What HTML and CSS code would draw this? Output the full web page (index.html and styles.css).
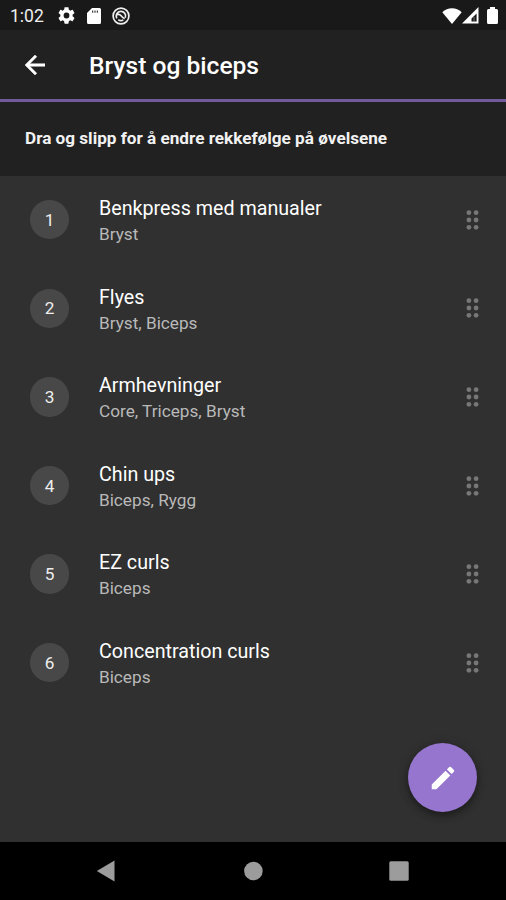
FILE: index.html
```html
<!DOCTYPE html>
<html lang="no">
<head>
<meta charset="utf-8">
<title>Bryst og biceps</title>
<link rel="stylesheet" href="styles.css">
</head>
<body>
<svg class="defs" aria-hidden="true">
  <symbol id="grip" viewBox="0 0 13 20"><circle cx="2.900" cy="2.700" r="2.400"/><circle cx="10.100" cy="2.700" r="2.400"/><circle cx="2.900" cy="10" r="2.400"/><circle cx="10.100" cy="10" r="2.400"/><circle cx="2.900" cy="17.300" r="2.400"/><circle cx="10.100" cy="17.300" r="2.400"/></symbol>
</svg>
<div class="screen">
  <div class="status">
    <span class="clock">1:02</span>
    <svg class="gear" viewBox="2 2 20 20"><path fill-rule="evenodd" d="M19.140 12.940c.04-.3.06-.61.06-.94 0-.32-.02-.64-.07-.94l2.030-1.580c.18-.14.23-.41.12-.61l-1.920-3.320c-.12-.22-.37-.29-.59-.22l-2.390.96c-.5-.38-1.030-.7-1.620-.94l-.36-2.540c-.04-.24-.24-.41-.48-.41h-3.840c-.24 0-.43.17-.47.41l-.36 2.540c-.59.24-1.130.57-1.620.94l-2.390-.96c-.22-.08-.47 0-.59.22L2.740 8.870c-.12.21-.08.47.12.61l2.030 1.580c-.05.3-.09.63-.09.94s.02.64.07.94l-2.030 1.580c-.18.14-.23.41-.12.61l1.920 3.320c.12.22.37.29.59.22l2.390-.96c.5.38 1.030.7 1.620.94l.36 2.540c.05.24.24.41.48.41h3.840c.24 0 .44-.17.47-.41l.36-2.540c.59-.24 1.130-.56 1.620-.94l2.390.96c.22.08.47 0 .59-.22l1.920-3.320c.12-.22.07-.47-.12-.61zM12 15.400A3.400 3.400 0 1 1 12 8.600a3.400 3.400 0 0 1 0 6.800z"/></svg>
    <svg class="card" viewBox="0 0 14 16"><path fill-rule="evenodd" d="M5 0h7.500Q14 0 14 1.500v13Q14 16 12.500 16h-11Q0 16 0 14.500V5zM5.200 2.600v2.200h1V2.600zM7.500 2.600v2.200h1V2.600zM9.800 2.600v2.200h1V2.600z"/></svg>
    <svg class="dnd" viewBox="0 0 18 18"><circle cx="9" cy="9" r="7.900"/><path d="M4.800 11.300A4.700 4.700 0 1 1 13.300 10.800M4.800 7.800c2-.8 3.300-.2 4.300 1s2.200 2.400 3.600 3M6.300 12.600c1.500 1.200 3.400 1.300 5 .3"/></svg>
    <svg class="wifi" viewBox="0 0 20 16"><path d="M10 16 .3 4.300C3 1.600 6.300.3 10 .3s7 1.300 9.700 4z"/></svg>
    <svg class="signal" viewBox="0 0 17 17"><path fill-rule="evenodd" d="M16.500 0v16.500H0zM14.600 6.500 9.500 11.500v3h5.100z"/><path d="M11.300 10h1.500v4.500h-1.500z" opacity=".25"/></svg>
    <svg class="battery" viewBox="0 0 11 17"><path d="M3 0h5v2h1.500Q11 2 11 3.500v12Q11 17 9.500 17h-8Q0 17 0 15.500v-12Q0 2 1.500 2H3z"/></svg>
  </div>
  <header class="bar">
    <svg class="back" viewBox="4 4 16 16"><path d="M20 11H7.830l5.590-5.590L12 4l-8 8 8 8 1.410-1.410L7.830 13H20z"/></svg>
    <h1>Bryst og biceps</h1>
  </header>
  <div class="hint"><span>Dra og slipp for å endre rekkefølge på øvelsene</span></div>
  <main class="list">
    <div class="row"><span class="num">1</span><div class="text"><div class="name">Benkpress med manualer</div><div class="sub">Bryst</div></div><svg class="grip"><use href="#grip"/></svg></div>
    <div class="row"><span class="num">2</span><div class="text"><div class="name">Flyes</div><div class="sub">Bryst, Biceps</div></div><svg class="grip"><use href="#grip"/></svg></div>
    <div class="row"><span class="num">3</span><div class="text"><div class="name">Armhevninger</div><div class="sub">Core, Triceps, Bryst</div></div><svg class="grip"><use href="#grip"/></svg></div>
    <div class="row"><span class="num">4</span><div class="text"><div class="name">Chin ups</div><div class="sub">Biceps, Rygg</div></div><svg class="grip"><use href="#grip"/></svg></div>
    <div class="row"><span class="num">5</span><div class="text"><div class="name">EZ curls</div><div class="sub">Biceps</div></div><svg class="grip"><use href="#grip"/></svg></div>
    <div class="row"><span class="num">6</span><div class="text"><div class="name">Concentration curls</div><div class="sub">Biceps</div></div><svg class="grip"><use href="#grip"/></svg></div>
  </main>
  <button class="fab" aria-label="Rediger"><svg viewBox="0 0 24 24"><path d="M3 17.250V21h3.750L17.810 9.940l-3.750-3.750L3 17.250zM20.710 7.040a1 1 0 0 0 0-1.410l-2.340-2.340a1 1 0 0 0-1.410 0l-1.830 1.830 3.750 3.750 1.830-1.830z"/></svg></button>
  <nav class="nav">
    <svg viewBox="0 0 20 22"><path d="M18.500.5v21L.8 11z"/></svg>
    <svg viewBox="0 0 20 22"><circle cx="10.400" cy="11" r="9.300"/></svg>
    <svg viewBox="0 0 20 22"><rect x=".3" y="1.300" width="19.400" height="19.400" rx="1.500"/></svg>
  </nav>
</div>
</body>
</html>
```

FILE: styles.css
```css
* { box-sizing: border-box; }
body { margin: 0; background: #303030; font-family: Roboto, "Liberation Sans", sans-serif; color: #fff; }
.defs { position: absolute; width: 0; height: 0; }
.screen { position: relative; display: flex; flex-direction: column; width: 506px; height: 900px; overflow: hidden; background: #303030; }
svg { flex: none; fill: #fff; }

.status { display: flex; align-items: center; height: 30px; padding: 1px 8px 0 10px; background: #191919; }
.clock { width: 48px; font-size: 17.500px; line-height: 20px; color: #eee; white-space: nowrap; }
.gear { width: 17px; height: 17px; }
.card { width: 14px; height: 16px; margin-left: 12px; }
.dnd { width: 18px; height: 18px; margin-left: 11px; fill: none; stroke: #eee; stroke-width: 1.700; }
.wifi { width: 20px; height: 16px; margin-left: auto; }
.signal { width: 17px; height: 17px; }
.battery { width: 11px; height: 17px; margin-left: 8px; }

.bar { display: flex; align-items: center; height: 72px; padding: 0 25px; background: #212121; border-bottom: 3px solid #705a9b; }
.back { width: 20px; height: 20px; stroke: #fff; stroke-width: .4; }
h1 { margin: 0 0 0 44px; padding-top: 2px; font-size: 24.600px; line-height: 30px; font-weight: 500; white-space: nowrap; }

.hint { display: flex; align-items: center; height: 73.500px; padding: 0 25px 1px; background: #212121; font-size: 17.150px; font-weight: 700; color: #f2f2f2; white-space: nowrap; }

.list { flex: 1; }
.row { display: flex; align-items: center; height: 88.600px; padding: 0 27px 0 30px; }
.num { display: flex; align-items: center; justify-content: center; width: 39.400px; height: 39.400px; border-radius: 50%; background: #484848; font-size: 17.200px; color: #eee; }
.text { flex: 1; margin-left: 29.600px; padding-top: 3px; white-space: nowrap; }
.name { font-size: 19.700px; line-height: 26px; color: #fff; }
.sub { font-size: 17.200px; line-height: 24.500px; color: #b9b9b9; }
.grip { width: 13px; height: 20px; fill: #777; }

.fab { position: absolute; left: 408px; top: 743px; display: flex; align-items: center; justify-content: center; width: 69px; height: 69px; padding: 0; border: 0; border-radius: 50%; background: #9575cd; box-shadow: 0 4px 7px rgba(0, 0, 0, .35), 0 1px 12px rgba(0, 0, 0, .15); }
.fab svg { width: 30px; height: 30px; }

.nav { display: flex; align-items: center; justify-content: space-between; height: 58px; padding: 0 97px 0 96px; background: #000; }
.nav svg { width: 20px; height: 22px; fill: #9c9c9c; }
```
